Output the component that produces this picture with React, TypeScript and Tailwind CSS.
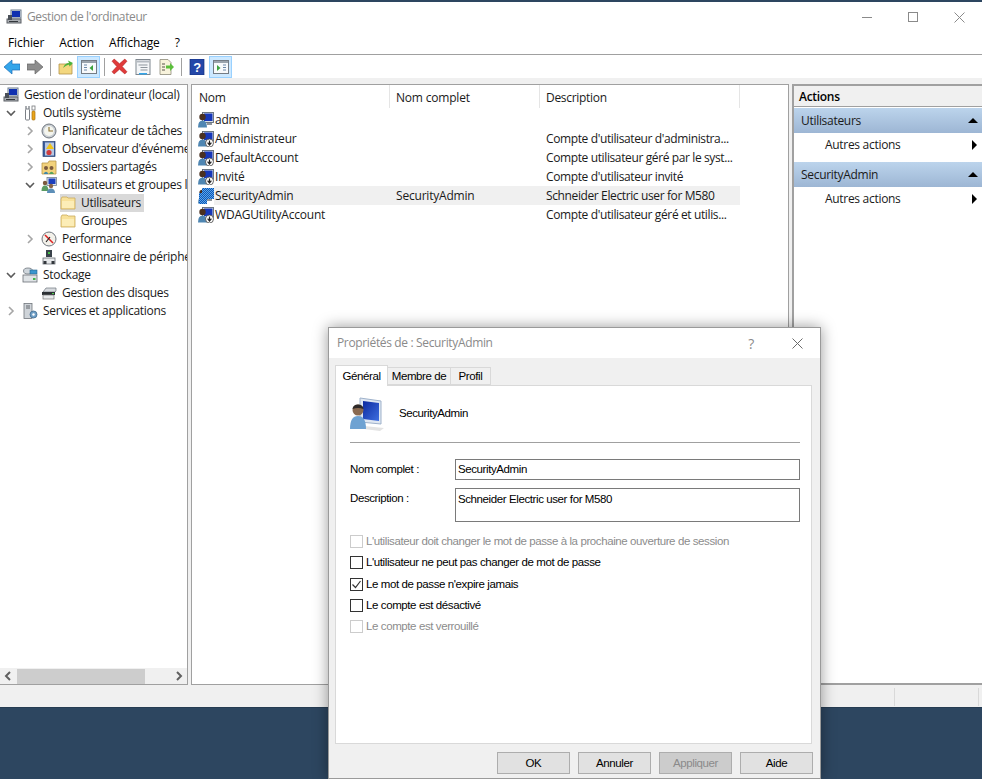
import type { ReactNode } from 'react';

const ui = 'font-["Open_Sans",sans-serif]';
const dlg = 'font-["Liberation_Sans",sans-serif]';

function Svg({ children, size = 16, box = 16 }: { children: ReactNode; size?: number; box?: number }) {
  return (
    <svg width={size} height={size} viewBox={`0 0 ${box} ${box}`} className="shrink-0">
      {children}
    </svg>
  );
}

function ComputerIcon() {
  return (
    <Svg>
      <rect x="5" y="1" width="10" height="8" fill="#dfe6ef" stroke="#6b7a8c" />
      <rect x="6" y="2" width="8" height="6" fill="#1030b0" />
      <rect x="1" y="10" width="14" height="4" fill="#a9adb2" stroke="#5c6066" />
      <rect x="2" y="6" width="4" height="5" fill="#4a5058" />
      <rect x="3" y="12" width="9" height="1" fill="#33373c" />
    </Svg>
  );
}

function UserIcon({ down, selected }: { down?: boolean; selected?: boolean }) {
  return (
    <Svg>
      <defs>
        <pattern id="dith" width="2" height="2" patternUnits="userSpaceOnUse">
          <rect width="2" height="2" fill="#0f55b5" />
          <rect width="1" height="1" fill="#5aa6ea" />
          <rect x="1" y="1" width="1" height="1" fill="#5aa6ea" />
        </pattern>
      </defs>
      <rect x="4.5" y="0.5" width="11" height="10" fill="#d8dfe8" stroke="#5f6a78" strokeWidth="0.9" />
      <rect x="6" y="1.5" width="8.5" height="7.5" fill="#1637b8" />
      <circle cx="4.5" cy="5" r="3.2" fill="#4a3020" />
      <path d="M0 15.5 Q0 8.5 4.5 8.5 Q9 8.5 9 15.5 Z" fill="#4f86b2" />
      <path d="M9 11 H14 V13 H9 Z" fill="#8e959c" />
      {down && (
        <>
          <circle cx="11.5" cy="12" r="4" fill="#ffffff" stroke="#444" strokeWidth="0.8" />
          <path d="M11.5 9.5 V13 M9.6 11.6 L11.5 14 L13.4 11.6" stroke="#222" strokeWidth="1.2" fill="none" />
        </>
      )}
      {selected && <path d="M4 0 H16 V11 H9 V16 H1 V5 H4 Z" fill="url(#dith)" />}
    </Svg>
  );
}

function FolderIcon() {
  return (
    <Svg>
      <path d="M1 4 V14 H15 V3 H8 L7 2 H2 Z" fill="#f8e19a" stroke="#c9a95a" strokeWidth="0.8" />
      <path d="M2 6 H14 V13 H2 Z" fill="#fcedb7" />
    </Svg>
  );
}

function ToolsIcon() {
  return (
    <Svg>
      <path d="M4 1 V4 M7 1 V4" stroke="#7c8187" strokeWidth="1.3" />
      <rect x="3.5" y="4" width="4" height="11" rx="1" fill="#fff" stroke="#6d7278" strokeWidth="0.9" />
      <rect x="10" y="1" width="3" height="4" fill="#fff" stroke="#77797c" strokeWidth="0.8" />
      <rect x="10" y="6" width="3" height="9" rx="1" fill="#eaa51a" stroke="#a9700c" strokeWidth="0.7" />
    </Svg>
  );
}

function ClockIcon() {
  return (
    <Svg>
      <circle cx="8" cy="8" r="7" fill="#c9ced4" stroke="#6f767e" />
      <circle cx="8" cy="8" r="5" fill="#f4f5ee" />
      <path d="M8 4 V8 H12" stroke="#8a6f2e" strokeWidth="1.1" fill="none" />
    </Svg>
  );
}

function LogIcon() {
  return (
    <Svg>
      <rect x="2" y="0.5" width="12" height="15" fill="#3d5f9e" stroke="#2a4272" strokeWidth="0.7" />
      <rect x="4" y="1.5" width="9" height="13" fill="#b9c8e2" />
      <path d="M9 2 L13 8 H5 Z" fill="#f0c419" />
      <circle cx="8" cy="11.5" r="2.6" fill="#cf3b3b" />
    </Svg>
  );
}

function SharedIcon() {
  return (
    <Svg>
      <path d="M1 4 V15 H15 V2 H8 L7 4 Z" fill="#f2d27c" stroke="#b9974a" strokeWidth="0.8" />
      <circle cx="5" cy="9" r="2" fill="#7b5a3e" />
      <circle cx="10.5" cy="9" r="2" fill="#7b5a3e" />
      <path d="M2.5 15 Q5 10.5 7.5 15 Z" fill="#3f87a8" />
      <path d="M8 15 Q10.5 10.5 13 15 Z" fill="#57a35c" />
    </Svg>
  );
}

function GroupIcon() {
  return (
    <Svg>
      <rect x="6" y="0.5" width="9.5" height="8" fill="#dce4ee" stroke="#74808e" strokeWidth="0.8" />
      <rect x="7.5" y="1.5" width="7" height="5.5" fill="#1c3fbd" />
      <circle cx="4" cy="6" r="2.2" fill="#7b5a3e" />
      <path d="M0.5 14 Q0.5 8.5 4 8.5 Q7.5 8.5 7.5 14 Z" fill="#5b9c62" />
      <circle cx="10" cy="9" r="2.2" fill="#8a654a" />
      <path d="M6 16 Q6 11.5 10 11.5 Q14 11.5 14 16 Z" fill="#5d8fb8" />
    </Svg>
  );
}

function PerfIcon() {
  return (
    <Svg>
      <circle cx="8" cy="8" r="7" fill="#f3f1ea" stroke="#6f767e" />
      <path d="M4 4 L12 12" stroke="#d22" strokeWidth="1.6" />
      <path d="M5 11 L9 6" stroke="#222" strokeWidth="1.2" />
    </Svg>
  );
}

function DeviceIcon() {
  return (
    <Svg>
      <rect x="5" y="1" width="6" height="7" fill="#39424a" />
      <rect x="7" y="3" width="2" height="2" fill="#48c048" />
      <rect x="2" y="9" width="12" height="6" fill="#e6e8ea" stroke="#6a6f75" strokeWidth="0.8" />
      <rect x="2.5" y="12" width="3" height="3" fill="#33373c" />
      <rect x="10.5" y="12" width="3" height="3" fill="#33373c" />
    </Svg>
  );
}

function StorageIcon() {
  return (
    <Svg>
      <ellipse cx="6" cy="4" rx="4.5" ry="3" fill="#cfd6dc" stroke="#6f767e" strokeWidth="0.8" />
      <rect x="8" y="3" width="7" height="4" fill="#3a96cf" stroke="#28668e" strokeWidth="0.6" />
      <rect x="1" y="8" width="14" height="7" fill="#dfe3e6" stroke="#6a6f75" strokeWidth="0.8" />
      <rect x="11" y="11" width="2.5" height="2" fill="#41b64a" />
    </Svg>
  );
}

function DiskIcon() {
  return (
    <Svg>
      <path d="M2 7 L5 3 H15 V6 L14 7 Z" fill="#d7dade" stroke="#6f767e" strokeWidth="0.7" />
      <rect x="1" y="7" width="13" height="3" fill="#2b2f33" />
      <rect x="11" y="8" width="2" height="1" fill="#4cd04c" />
      <rect x="2" y="10" width="11" height="4" fill="#e8eaec" stroke="#777" strokeWidth="0.7" />
    </Svg>
  );
}

function ServicesIcon() {
  return (
    <Svg>
      <rect x="2" y="0.5" width="8" height="15" fill="#cfd4d9" stroke="#71767c" strokeWidth="0.8" />
      <path d="M4 3 H8 M4 5 H8" stroke="#60656b" />
      <circle cx="11.5" cy="11.5" r="3.5" fill="#6f9fc6" stroke="#3f6a8e" strokeWidth="0.8" />
      <circle cx="11.5" cy="11.5" r="1.2" fill="#fff" />
    </Svg>
  );
}

function Chevron({ open }: { open?: boolean }) {
  return (
    <svg width="18" height="18" viewBox="0 0 18 18" className="shrink-0">
      {open ? (
        <path d="M5 7 L9 11 L13 7" fill="none" stroke="#5a5a5a" strokeWidth="1.6" />
      ) : (
        <path d="M7 5 L11 9 L7 13" fill="none" stroke="#a6a6a6" strokeWidth="1.6" />
      )}
    </svg>
  );
}

type TreeRowProps = {
  pad: string;
  chevron?: 'open' | 'closed' | 'none';
  icon: ReactNode;
  label: string;
  active?: boolean;
};

function TreeRow({ pad, chevron, icon, label, active }: TreeRowProps) {
  return (
    <div className={`flex h-[18px] items-center whitespace-nowrap ${pad}`}>
      {chevron === 'open' && <Chevron open />}
      {chevron === 'closed' && <Chevron />}
      {chevron === 'none' && <span className="w-[18px] shrink-0" />}
      <div className={`ml-0.5 flex h-[18px] items-center pr-[3px] ${active ? 'bg-[#d9d9d9]' : ''}`}>
        {icon}
        <span className="ml-[5px]">{label}</span>
      </div>
    </div>
  );
}

const users = [
  { name: 'admin', full: '', desc: '' },
  { name: 'Administrateur', full: '', desc: "Compte d'utilisateur d'administra...", down: true },
  { name: 'DefaultAccount', full: '', desc: 'Compte utilisateur géré par le syst...', down: true },
  { name: 'Invité', full: '', desc: "Compte d'utilisateur invité", down: true },
  { name: 'SecurityAdmin', full: 'SecurityAdmin', desc: 'Schneider Electric user for M580', selected: true },
  { name: 'WDAGUtilityAccount', full: '', desc: "Compte d'utilisateur géré et utilis...", down: true },
];

function ToolButton({ children, active }: { children: ReactNode; active?: boolean }) {
  return (
    <div
      className={`flex h-[22px] w-[23px] items-center justify-center border ${
        active ? 'border-[#99d1ff] bg-[#cce8ff]' : 'border-transparent'
      }`}
    >
      {children}
    </div>
  );
}

function ToolSep() {
  return (
    <div className="flex h-[22px] w-[8px] items-center justify-center">
      <div className="h-[18px] w-px bg-[#a0a0a0]" />
    </div>
  );
}

function Toolbar() {
  return (
    <div className="flex h-[23px] items-center bg-white">
      <ToolButton>
        <Svg>
          <path d="M0 8 L8 1 V5 H16 V11 H8 V15 Z" fill="#33a5ea" stroke="#1c6fb8" strokeWidth="0.7" />
        </Svg>
      </ToolButton>
      <ToolButton>
        <Svg>
          <path d="M16 8 L8 1 V5 H0 V11 H8 V15 Z" fill="#8d8d8d" stroke="#666" strokeWidth="0.7" />
        </Svg>
      </ToolButton>
      <ToolSep />
      <ToolButton>
        <Svg>
          <path d="M1 5 V15 H14 V5 Z" fill="#f3d77f" stroke="#b2924a" strokeWidth="0.8" />
          <path d="M5 9 Q7 4 11 4 L10 1.5 L15 4 L11.5 7.5 L11 5.5 Q8 6 5 9 Z" fill="#4bb23c" />
        </Svg>
      </ToolButton>
      <ToolButton active>
        <Svg>
          <rect x="0.5" y="1.5" width="15" height="13" fill="#f7f9fb" stroke="#747c85" />
          <rect x="1" y="2" width="14" height="2" fill="#9aa3ac" />
          <path d="M3 6 H6 M3 8.5 H6 M3 11 H6" stroke="#6a87a8" />
          <path d="M12 6 V12 L8.5 9 Z" fill="#3da33d" />
        </Svg>
      </ToolButton>
      <ToolSep />
      <ToolButton>
        <Svg size={17}>
          <path d="M1 3 L3 1 L8 5.5 L13 1 L15 3 L10.5 8 L15 13 L13 15 L8 10.5 L3 15 L1 13 L5.5 8 Z" fill="#e03a3a" stroke="#b32626" strokeWidth="0.6" />
        </Svg>
      </ToolButton>
      <ToolButton>
        <Svg>
          <rect x="1" y="0.5" width="14" height="15" fill="#f4f6f8" stroke="#7f878f" />
          <rect x="2" y="1.5" width="12" height="2" fill="#b4bac1" />
          <path d="M3.5 6 H12.5 M5.5 8.5 H12.5 M5.5 11 H12.5" stroke="#8d959d" />
          <rect x="4" y="14" width="8" height="1.5" fill="#33a5ea" />
        </Svg>
      </ToolButton>
      <ToolButton>
        <Svg>
          <path d="M2 0.5 H10 L13 3.5 V15.5 H2 Z" fill="#f8f3dc" stroke="#8d8a78" strokeWidth="0.8" />
          <path d="M4 5 H7 M4 8 H7 M4 11 H7" stroke="#56524a" />
          <path d="M8 6.5 H12 V4 L16 8 L12 12 V9.5 H8 Z" fill="#5cbf3c" />
        </Svg>
      </ToolButton>
      <ToolSep />
      <ToolButton>
        <Svg>
          <rect x="1" y="0" width="14" height="16" fill="#2447a8" stroke="#152f78" strokeWidth="0.7" />
          <text x="8" y="13" textAnchor="middle" fontSize="13" fontWeight="700" fill="#ffffff" fontFamily="Liberation Sans, sans-serif">?</text>
        </Svg>
      </ToolButton>
      <div className="ml-px">
        <ToolButton active>
          <Svg>
            <rect x="0.5" y="1.5" width="15" height="13" fill="#f7f9fb" stroke="#747c85" />
            <rect x="1" y="2" width="14" height="2" fill="#9aa3ac" />
            <path d="M4 6 V12 L7.5 9 Z" fill="#3da33d" />
            <path d="M10 6 H13 M10 8.5 H13 M10 11 H13" stroke="#6a87a8" />
          </Svg>
        </ToolButton>
      </div>
    </div>
  );
}

function TreePane() {
  return (
    <div className="flex w-[188px] shrink-0 flex-col border border-l-0 border-[#a0a0a0] bg-white">
      <div className="flex-1 overflow-hidden pt-px">
        <TreeRow pad="pl-px" icon={<ComputerIcon />} label="Gestion de l'ordinateur (local)" />
        <TreeRow pad="pl-0.5" chevron="open" icon={<ToolsIcon />} label="Outils système" />
        <TreeRow pad="pl-[21px]" chevron="closed" icon={<ClockIcon />} label="Planificateur de tâches" />
        <TreeRow pad="pl-[21px]" chevron="closed" icon={<LogIcon />} label="Observateur d'événements" />
        <TreeRow pad="pl-[21px]" chevron="closed" icon={<SharedIcon />} label="Dossiers partagés" />
        <TreeRow pad="pl-[21px]" chevron="open" icon={<GroupIcon />} label="Utilisateurs et groupes locaux" />
        <TreeRow pad="pl-[58px]" icon={<FolderIcon />} label="Utilisateurs" active />
        <TreeRow pad="pl-[58px]" icon={<FolderIcon />} label="Groupes" />
        <TreeRow pad="pl-[21px]" chevron="closed" icon={<PerfIcon />} label="Performance" />
        <TreeRow pad="pl-[21px]" chevron="none" icon={<DeviceIcon />} label="Gestionnaire de périphériques" />
        <TreeRow pad="pl-0.5" chevron="open" icon={<StorageIcon />} label="Stockage" />
        <TreeRow pad="pl-[21px]" chevron="none" icon={<DiskIcon />} label="Gestion des disques" />
        <TreeRow pad="pl-0.5" chevron="closed" icon={<ServicesIcon />} label="Services et applications" />
      </div>
      <div className="flex h-[16px] items-center bg-[#f0f0f0]">
        <svg width="17" height="16" viewBox="0 0 17 16" className="shrink-0">
          <path d="M10 4 L6 8 L10 12" fill="none" stroke="#606060" strokeWidth="2" />
        </svg>
        <div className="h-[15px] w-[128px] bg-[#cdcdcd]" />
        <div className="flex-1" />
        <svg width="17" height="16" viewBox="0 0 17 16" className="shrink-0">
          <path d="M7 4 L11 8 L7 12" fill="none" stroke="#606060" strokeWidth="2" />
        </svg>
      </div>
    </div>
  );
}

function HeaderCell({ label, width }: { label: string; width: string }) {
  return (
    <div className={`flex h-[23px] items-center border-r border-[#e5e5e5] pt-0.5 ${width}`}>{label}</div>
  );
}

function UsersPane() {
  return (
    <div className="ml-[3px] flex-1 border border-[#a0a0a0] bg-white">
      <div className="flex">
        <HeaderCell label="Nom" width="w-[198px] pl-[7px]" />
        <HeaderCell label="Nom complet" width="w-[150px] pl-[6px] tracking-[-0.2px]" />
        <HeaderCell label="Description" width="w-[200px] pl-[6px]" />
      </div>
      <div className="mt-[2px]">
        {users.map((user) => (
          <div key={user.name} className="flex h-[19px] w-[548px] items-center whitespace-nowrap">
            <div className="flex w-[198px] items-center pl-[6px] tracking-[-0.2px]">
              <UserIcon down={user.down} selected={user.selected} />
              <span className={`pl-px ${user.selected ? 'flex-1 bg-[#f0f0f0] leading-[19px]' : ''}`}>{user.name}</span>
            </div>
            <div className={`h-[19px] w-[150px] pl-[6px] leading-[19px] tracking-[-0.2px] ${user.selected ? 'bg-[#f0f0f0]' : ''}`}>{user.full}</div>
            <div className={`h-[19px] w-[200px] pl-[6px] leading-[19px] tracking-[-0.38px] ${user.selected ? 'bg-[#f0f0f0]' : ''}`}>{user.desc}</div>
          </div>
        ))}
      </div>
    </div>
  );
}

function ActionGroup({ title }: { title: string }) {
  return (
    <div>
      <div className="flex h-[25px] items-center justify-between bg-gradient-to-b from-[#bcd4ec] to-[#9db6d4] pl-[7px] pr-[3px]">
        <span>{title}</span>
        <svg width="12" height="7" viewBox="0 0 12 7">
          <path d="M6 1 L11 6 H1 Z" fill="#000" />
        </svg>
      </div>
      <div className="flex h-[29px] items-center justify-between pb-[5px] pl-[31px] pr-[4px]">
        <span>Autres actions</span>
        <svg width="7" height="10" viewBox="0 0 7 10">
          <path d="M1 0 L6 5 L1 10 Z" fill="#000" />
        </svg>
      </div>
    </div>
  );
}

function ActionsPane() {
  return (
    <div className="ml-[3px] w-[190px] shrink-0 border-y-2 border-l-2 border-[#a0a0a0] bg-white">
      <div className="flex h-[21px] items-center border-b border-[#a0a0a0] bg-[#f0f0f0] pl-[5px] pt-0.5 font-semibold text-black">Actions</div>
      <div className="mt-px">
        <ActionGroup title="Utilisateurs" />
        <ActionGroup title="SecurityAdmin" />
      </div>
    </div>
  );
}

function CheckRow({ label, checked, disabled }: { label: string; checked?: boolean; disabled?: boolean }) {
  return (
    <div className="flex h-[21.25px] items-center">
      <div
        className={`flex h-[13px] w-[13px] items-center justify-center border bg-white ${
          disabled ? 'border-[#cccccc]' : 'border-[#333333]'
        }`}
      >
        {checked && (
          <svg width="11" height="11" viewBox="0 0 11 11">
            <path d="M1.5 5.5 L4.5 8.5 L9.5 2" fill="none" stroke="#333" strokeWidth="1.2" />
          </svg>
        )}
      </div>
      <span className={`ml-[3px] ${disabled ? 'text-[#8c8c8c]' : 'text-black'}`}>{label}</span>
    </div>
  );
}

function DialogButton({ label, disabled }: { label: string; disabled?: boolean }) {
  return (
    <div
      className={`flex h-[22px] w-[73px] items-center justify-center border border-[#adadad] pt-px ${
        disabled ? 'bg-[#cccccc] text-[#8a8a8a]' : 'bg-[#e1e1e1] text-black'
      }`}
    >
      {label}
    </div>
  );
}

function PropertiesDialog() {
  return (
    <div className={`absolute left-[328px] top-[327px] flex h-[452px] w-[493px] flex-col border border-[#9a9a9a] bg-[#f0f0f0] text-[11.5px] tracking-[-0.4px] text-black shadow-[0_0_14px_rgba(0,0,0,0.4)] ${dlg}`}>
      <div className="flex h-[30px] shrink-0 items-center bg-white">
        <span className={`pl-2 text-[12px] tracking-[-0.35px] text-[#8a8a8a] ${ui}`}>Propriétés de : SecurityAdmin</span>
        <span className={`ml-auto w-[46px] text-center text-[14px] text-[#8a8a8a] ${ui}`}>?</span>
        <div className="flex h-[30px] w-[46px] items-center justify-center">
          <svg width="11" height="11" viewBox="0 0 11 11">
            <path d="M0.5 0.5 L10.5 10.5 M10.5 0.5 L0.5 10.5" stroke="#6a6a6a" />
          </svg>
        </div>
      </div>
      <div className="flex h-[27px] shrink-0 items-end pl-[6px]">
        <div className="z-10 -mb-px flex h-[21px] w-[53px] items-center justify-center border border-b-0 border-[#d9d9d9] bg-white pt-px">Général</div>
        <div className="flex h-[18px] w-[63px] items-center justify-center border border-l-0 border-[#d9d9d9] bg-[#f0f0f0] pt-[2px]">Membre de</div>
        <div className="flex h-[18px] w-[40px] items-center justify-center border border-l-0 border-[#d9d9d9] bg-[#f0f0f0] pt-[2px]">Profil</div>
      </div>
      <div className="mx-[6px] flex h-[359px] w-[477px] shrink-0 flex-col border border-[#d9d9d9] bg-white pl-[14px] pr-[11px]">
        <div className="flex h-[57px] shrink-0 items-center border-b border-[#a0a0a0]">
          <svg width="36" height="36" viewBox="0 0 36 36" className="shrink-0">
            <defs>
              <linearGradient id="screen" x1="0" y1="0" x2="1" y2="1">
                <stop offset="0" stopColor="#0c2aa0" />
                <stop offset="1" stopColor="#3f6fe0" />
              </linearGradient>
            </defs>
            <path d="M10 2 L31 5 V28 L10 26 Z" fill="#dfe7f2" stroke="#9fb2cb" />
            <path d="M13 5 L29 7 V25 L13 23 Z" fill="url(#screen)" />
            <path d="M14 30 L34 32 L30 35 L14 33 Z" fill="#e3e3e3" />
            <circle cx="8" cy="14" r="5.5" fill="#8a6a50" />
            <path d="M2.5 13 Q3 8.5 8 8.5 Q13 8.5 13.5 13 Q8 11 2.5 13 Z" fill="#2e2a28" />
            <path d="M0 33 Q0 20 8 20 Q16 20 16 33 Z" fill="#6ea2d2" />
          </svg>
          <span className="ml-[13px]">SecurityAdmin</span>
        </div>
        <div className="mt-4 flex items-center">
          <span className="w-[105px]">Nom complet :</span>
          <div className="flex h-[21px] flex-1 items-center border border-[#7a7a7a] pl-[2px]">SecurityAdmin</div>
        </div>
        <div className="mt-[8px] flex items-start">
          <span className="w-[105px] pt-[2px]">Description :</span>
          <div className="h-[34px] flex-1 border border-[#7a7a7a] pl-[2px] pt-[2px]">Schneider Electric user for M580</div>
        </div>
        <div className="mt-[9px]">
          <CheckRow label="L'utilisateur doit changer le mot de passe à la prochaine ouverture de session" disabled />
          <CheckRow label="L'utilisateur ne peut pas changer de mot de passe" />
          <CheckRow label="Le mot de passe n'expire jamais" checked />
          <CheckRow label="Le compte est désactivé" />
          <CheckRow label="Le compte est verrouillé" disabled />
        </div>
      </div>
      <div className="mt-2 flex justify-end gap-2 pr-[7px]">
        <DialogButton label="OK" />
        <DialogButton label="Annuler" />
        <DialogButton label="Appliquer" disabled />
        <DialogButton label="Aide" />
      </div>
    </div>
  );
}

export default function App() {
  return (
    <div className={`relative flex h-[779px] w-[982px] flex-col overflow-hidden bg-[#2d4660] text-[12px] tracking-[-0.3px] text-[#1a1a1a] ${ui}`}>
      <div className="h-[2px] bg-[#2d4660]" />
      <div className="flex h-[30px] items-center bg-white">
        <div className="ml-[6px]">
          <ComputerIcon />
        </div>
        <span className="ml-[5px] tracking-[-0.39px] text-[#8a8a8a]">Gestion de l'ordinateur</span>
        <div className="ml-auto flex h-[30px]">
          <div className="flex w-[46px] items-center justify-center">
            <div className="h-px w-[10px] bg-[#8a8a8a]" />
          </div>
          <div className="flex w-[46px] items-center justify-center">
            <div className="h-[10px] w-[10px] border border-[#8a8a8a]" />
          </div>
          <div className="flex w-[46px] items-center justify-center">
            <svg width="11" height="11" viewBox="0 0 11 11">
              <path d="M0.5 0.5 L10.5 10.5 M10.5 0.5 L0.5 10.5" stroke="#8a8a8a" />
            </svg>
          </div>
        </div>
      </div>
      <div className="flex h-[23px] items-center gap-[15px] border-b border-[#a0a0a0] bg-white pl-2 tracking-[-0.1px] text-black">
        <span>Fichier</span>
        <span>Action</span>
        <span>Affichage</span>
        <span>?</span>
      </div>
      <Toolbar />
      <div className="flex h-[630px] flex-col border-b border-[#263c52] bg-[#f0f0f0] pt-[6px]">
        <div className="flex h-[601px]">
          <TreePane />
          <UsersPane />
          <ActionsPane />
        </div>
        <div className="flex flex-1 justify-end pr-[3px] pt-[3px]">
          <div className="h-[18px] w-[85px] border-x border-[#d9d9d9]" />
        </div>
      </div>
      <PropertiesDialog />
    </div>
  );
}
